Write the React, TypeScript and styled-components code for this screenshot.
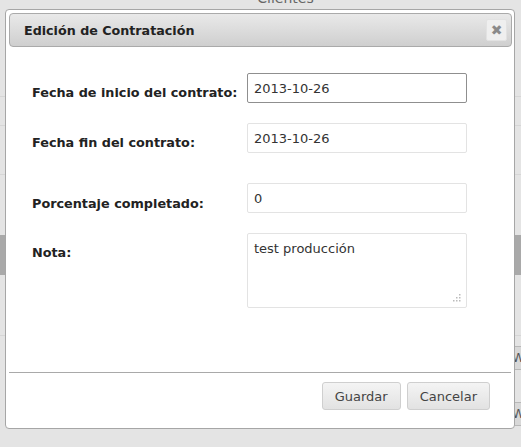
import React from "react";
import styled, { createGlobalStyle } from "styled-components";

const Global = createGlobalStyle`
  html, body { margin: 0; padding: 0; }
  body {
    background: #e4e4e4;
    font-family: "DejaVu Sans", Verdana, sans-serif;
    overflow: hidden;
  }
`;

const Page = styled.div`
  position: relative;
  width: 521px;
  height: 447px;
  overflow: hidden;
  background: #e4e4e4;
  display: flex;
  flex-direction: column;
`;

const BgHeader = styled.div`
  height: 6px;
  display: flex;
  justify-content: center;
  overflow: hidden;
  padding-left: 50px;
`;

const BgHeaderText = styled.span`
  font-size: 14px;
  line-height: 14px;
  color: #666;
  margin-top: -9px;
`;

const BgRow = styled.div<{ $h: number; $bg?: string; $line?: boolean }>`
  height: ${(p) => p.$h}px;
  flex-shrink: 0;
  background: ${(p) => p.$bg || "transparent"};
  border-bottom: ${(p) => (p.$line ? "1px solid #d6d6d6" : "none")};
  display: flex;
  justify-content: flex-end;
  align-items: center;
`;

const BgButton = styled.div`
  width: 14px;
  height: 22px;
  margin-right: -6px;
  background: #d8d8d8;
  border: 1px solid #b8b8b8;
  color: #555;
  font-size: 13px;
  line-height: 22px;
  padding-left: 3px;
  overflow: hidden;
`;

const Dialog = styled.div`
  position: absolute;
  left: 5px;
  top: 9px;
  width: 503px;
  height: 415px;
  background: #fff;
  border: 1px solid #a6a6a6;
  border-radius: 4px;
  padding: 3px 2px 0 3px;
  display: flex;
  flex-direction: column;
  box-sizing: content-box;
`;

const TitleBar = styled.div`
  height: 32px;
  border: 1px solid #aaa;
  border-radius: 4px;
  background: linear-gradient(#e9e9e9, #cfcfcf);
  display: flex;
  align-items: center;
  justify-content: space-between;
  padding: 0 4px 0 14px;
`;

const Title = styled.span`
  font-weight: bold;
  font-size: 12.7px;
  color: #222;
`;

const CloseBtn = styled.div`
  width: 19px;
  height: 20px;
  background: #efefef;
  border: 1px solid #e2e2e2;
  border-radius: 2px;
  display: flex;
  align-items: center;
  justify-content: center;
  color: #8a8a8a;
  font-size: 14px;
  font-weight: bold;
`;

const Form = styled.div`
  flex: 1;
  display: flex;
  flex-direction: column;
  padding: 26px 0 0 23px;
`;

const Row = styled.div<{ $mb: number }>`
  display: flex;
  align-items: flex-start;
  margin-bottom: ${(p) => p.$mb}px;
`;

const Label = styled.label<{ $pt: number }>`
  width: 215px;
  padding-top: ${(p) => p.$pt}px;
  font-weight: bold;
  font-size: 12.8px;
  color: #222;
  line-height: 16px;
`;

const Input = styled.div<{ $focus?: boolean }>`
  width: 206px;
  height: 28px;
  border: 1px solid ${(p) => (p.$focus ? "#8f8f8f" : "#e3e3e3")};
  border-radius: 2px;
  padding: 0 6px;
  display: flex;
  align-items: center;
  font-size: 13px;
  color: #333;
`;

const TextArea = styled.div`
  position: relative;
  width: 206px;
  height: 66px;
  border: 1px solid #e3e3e3;
  border-radius: 2px;
  padding: 7px 6px 0;
  font-size: 13px;
  color: #333;
  line-height: 16px;
`;

const Grip = styled.svg`
  position: absolute;
  right: 5px;
  bottom: 5px;
`;

const Separator = styled.div`
  height: 1px;
  background: #a9a9a9;
  margin-right: 1px;
`;

const Footer = styled.div`
  height: 55px;
  display: flex;
  justify-content: flex-end;
  align-items: flex-start;
  padding: 9px 22px 0 0;
  gap: 6px;
  box-sizing: border-box;
`;

const Button = styled.div`
  height: 26px;
  padding: 0 12px;
  border: 1px solid #cfcfcf;
  border-radius: 3px;
  background: linear-gradient(#f4f4f4, #e2e2e2);
  display: flex;
  align-items: center;
  font-size: 13px;
  color: #444;
`;

export default function App() {
  return (
    <>
      <Global />
      <Page>
        <BgHeader>
          <BgHeaderText>Clientes</BgHeaderText>
        </BgHeader>
        <BgRow $h={90} $line />
        <BgRow $h={28} $line />
        <BgRow $h={48} $line />
        <BgRow $h={60} />
        <BgRow $h={40} $bg="#a9a9a9" />
        <BgRow $h={60} $line />
        <BgRow $h={10} />
        <BgRow $h={24}>
          <BgButton>W</BgButton>
        </BgRow>
        <BgRow $h={33} />
        <BgRow $h={22}>
          <BgButton>W</BgButton>
        </BgRow>
        <Dialog>
          <TitleBar>
            <Title>Edición de Contratación</Title>
            <CloseBtn>✖</CloseBtn>
          </TitleBar>
          <Form>
            <Row $mb={20}>
              <Label $pt={12}>Fecha de inicio del contrato:</Label>
              <Input $focus>2013-10-26</Input>
            </Row>
            <Row $mb={30}>
              <Label $pt={12}>Fecha fin del contrato:</Label>
              <Input>2013-10-26</Input>
            </Row>
            <Row $mb={20}>
              <Label $pt={13}>Porcentaje completado:</Label>
              <Input>0</Input>
            </Row>
            <Row $mb={0}>
              <Label $pt={12}>Nota:</Label>
              <TextArea>
                test producción
                <Grip width="8" height="8" viewBox="0 0 8 8">
                  <rect x="6" y="0" width="1.5" height="1.5" fill="#bbb" />
                  <rect x="3" y="3" width="1.5" height="1.5" fill="#bbb" />
                  <rect x="6" y="3" width="1.5" height="1.5" fill="#bbb" />
                  <rect x="0" y="6" width="1.5" height="1.5" fill="#bbb" />
                  <rect x="3" y="6" width="1.5" height="1.5" fill="#bbb" />
                  <rect x="6" y="6" width="1.5" height="1.5" fill="#bbb" />
                </Grip>
              </TextArea>
            </Row>
          </Form>
          <Separator />
          <Footer>
            <Button>Guardar</Button>
            <Button>Cancelar</Button>
          </Footer>
        </Dialog>
      </Page>
    </>
  );
}
